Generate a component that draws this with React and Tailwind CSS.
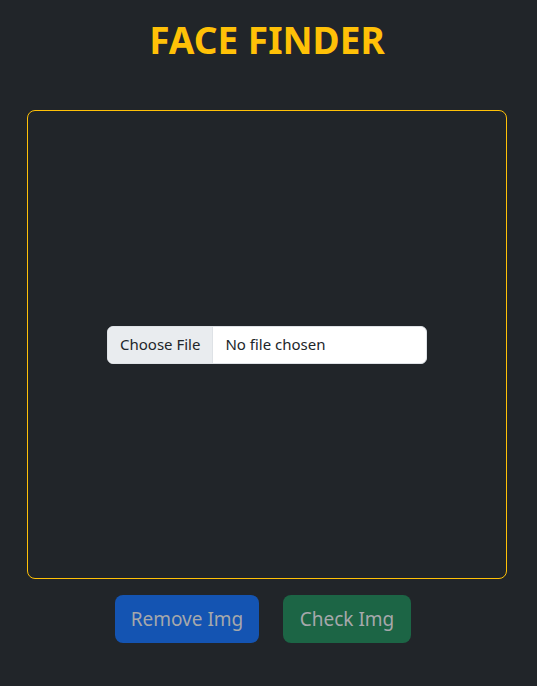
export default function App() {
  return (
    <div className="min-h-[686px] bg-[#212529] pr-[3px] text-white" style={{ fontFamily: '"Noto Sans", "Liberation Sans", sans-serif' }}>
      <h1 className="pt-4 text-center text-[37px] font-bold leading-[48px] text-[#ffc107]">FACE FINDER</h1>

      <div className="mx-auto mt-[46px] flex h-[469px] w-[480px] items-center justify-center rounded-lg border border-[#ffc107]">
        <label className="flex h-[38px] w-[320px] cursor-pointer overflow-hidden rounded-md border border-[#dee2e6] bg-white text-[15px] text-[#212529]">
          <span className="flex items-center border-r border-[#dee2e6] bg-[#e9ecef] px-3">Choose File</span>
          <span className="flex items-center px-3">No file chosen</span>
        </label>
      </div>

      <div className="mt-4 flex justify-center gap-6 pr-2">
        <button disabled className="h-12 w-[144px] rounded-lg bg-[#1454b2] text-[19px] text-[#a6a8ab]">Remove Img</button>
        <button disabled className="h-12 w-[128px] rounded-lg bg-[#1c6545] text-[19px] text-[#a6a8ab]">Check Img</button>
      </div>
    </div>
  )
}
